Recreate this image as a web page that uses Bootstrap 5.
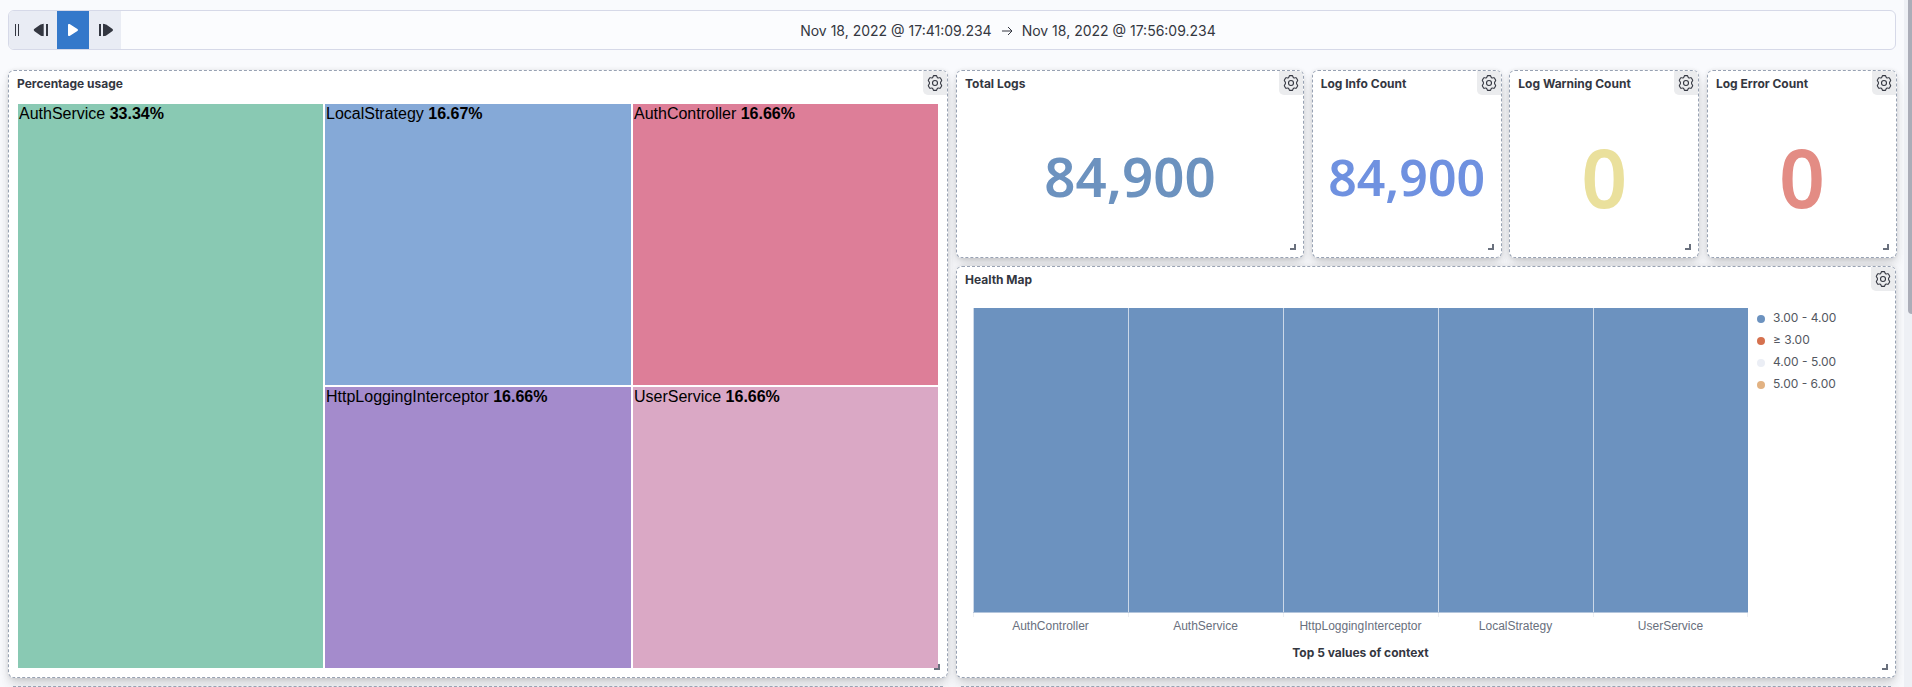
<!DOCTYPE html>
<html lang="en">
<head>
<meta charset="utf-8">
<title>Logs dashboard</title>
<meta name="viewport" content="width=device-width, initial-scale=1">
<link href="https://cdn.jsdelivr.net/npm/bootstrap@5.3.0/dist/css/bootstrap.min.css" rel="stylesheet">
<style>
body { background: #f9fafd; color: #343741; font-family: "Inter", sans-serif; font-size: 14px; }
.time-bar { height: 40px; margin: 10px 16px 0 8px; border: 1px solid #d6d9e8; border-radius: 6px; background: #fbfcfe; overflow: hidden; }
.time-tools { width: 112px; background: #e9ecf4; }
.tool-btn { width: 32px; color: #343741; }
.tool-btn.playing { background: #3478ca; color: #fff; }
.grip { width: 16px; }
.time-range { line-height: 20px; padding-top: 1px; }
.board { margin: 20px 7px 0 8px; gap: 8px; isolation: isolate; }
.col-half { width: 940px; }
.col-right { width: 941px; gap: 8px; }
.panel { position: relative; background: #fff; border: 1px dashed #98a2b3; border-radius: 6px; }
.panel::before { content: ""; position: absolute; inset: -1px; z-index: -1; border-radius: 6px;
  box-shadow: 0 .9px 4px -1px rgba(0,0,0,.1), 0 2.6px 8px -1px rgba(0,0,0,.08), 0 5.7px 12px -1px rgba(0,0,0,.07), 0 15px 15px -1px rgba(0,0,0,.05); }
.panel-title { font-size: 12px; font-weight: 700; line-height: 18px; padding: 4px 8px 0; margin: 0; height: 24px; }
.gear-btn { position: absolute; top: 0; right: 0; width: 24px; height: 24px; background: #ebecee; border-radius: 0 5px 0 5px; }
.resize-mark { position: absolute; right: 7px; bottom: 7px; width: 6px; height: 6px; border: solid #69707d; border-width: 0 2px 2px 0; }
.h-top { height: 188px; } .h-health { height: 412px; width: 940px; } .h-main { height: 608px; }
.w-total { width: 348px; } .w-count { width: 190px; }
.treemap { display: grid; grid-template-columns: 305px 306px 305px; grid-template-rows: 281px 281px; gap: 2px; margin: 9px 9px 0; font: 16px/18px "Liberation Sans", sans-serif; color: #000; }
.treemap > div { padding: 1px 0 0 1px; outline: 1px solid rgba(255,255,255,.7); }
.tall { grid-row: span 2; }
.figure-num { font-family: "Noto Sans", sans-serif; font-weight: 600; line-height: 1; }
.heat { margin: 17px 0 0 16px; width: 775px; }
.heat-cells { height: 305px; border-bottom: 1px solid #b3c5dc; background: #6c92bf; }
.heat-cells > div { width: 155px; border-left: 1px solid #cbd8e8; }
.heat-ticks { height: 4px; }
.heat-ticks > div { width: 155px; border-left: 1px solid #eceef2; }
.heat-ticks > div:last-child { border-right: 1px solid #eceef2; }
.heat-labels { font: 12px/14px "Liberation Sans", sans-serif; color: #69707d; margin-top: 2px; }
.heat-labels > div { width: 155px; text-align: center; }
.axis-name { font-size: 12px; font-weight: 700; line-height: 16px; margin-top: 12px; text-align: center; }
.legend-list { margin: 16px 0 0 9px; font-size: 12px; line-height: 22px; color: #535761; }
.dot { width: 8px; height: 8px; border-radius: 50%; margin-right: 8px; margin-top: 2px; }
.scroll-track { position: absolute; top: 0; right: 0; width: 8px; height: 100%; background: #eef0f5; }
.scroll-thumb { position: absolute; top: 0; right: 0; width: 4px; height: 314px; background: #abadb8; border-bottom-left-radius: 4px; }
.next-row { margin: 8px 16px 0 8px; gap: 8px; height: 1px; }
.next-row > div { width: 940px; flex: none; padding: 0 5px; }
.next-row > div > div { border-top: 1px dashed #98a2b3; }
</style>
</head>
<body>
<svg class="d-none"><symbol id="gear" viewBox="0 0 16 16"><g fill="none" stroke="#343741" stroke-width="1.1"><circle cx="8" cy="8" r="2.500"/><path d="M6.700 .6h2.600c.5 0 .6 1.700 1.300 2.200.8.500 2.300-.4 2.700 0l1.400 2.400c.3.500-1.200 1.500-1.200 2.800s1.500 2.300 1.200 2.800l-1.400 2.400c-.4.400-1.900-.5-2.700 0-.7.500-.8 2.200-1.300 2.200H6.700c-.5 0-.6-1.700-1.300-2.200-.8-.5-2.300.4-2.700 0L1.300 10.800C1 10.300 2.500 9.300 2.500 8S1 5.700 1.300 5.200l1.400-2.400c.4-.4 1.900.5 2.700 0C6.100 2.300 6.200.6 6.700.6z" stroke-linejoin="round"/></g></symbol></svg>
<div class="vh-100 overflow-hidden position-relative d-flow-root d-flex flex-column">
<div class="time-bar d-flex flex-shrink-0">
  <div class="time-tools d-flex align-items-stretch flex-shrink-0">
    <div class="grip d-flex align-items-center justify-content-center"><svg width="16" height="16" stroke="#343741"><path d="M6.500 2v12M9.500 2v12"/></svg></div>
    <div class="tool-btn d-flex align-items-center justify-content-center"><svg width="16" height="16" fill="currentColor"><path d="M13 2h2v12h-2zM10.700 2.300v11.400c0 .3-.4.500-.7.400-1.200 0-1.800-.2-2.500-.7L1.500 9.200c-1-.6-1-1.800 0-2.400l6-4.200C8.200 2.100 8.800 2 10 1.900c.4-.1.700.1.700.4z"/></svg></div>
    <div class="tool-btn playing d-flex align-items-center justify-content-center"><svg width="16" height="16" fill="currentColor"><path d="M3 3v10c0 .9.9 1.300 1.600.9L12.400 9c.8-.5.8-1.500 0-2L4.600 2.100C3.900 1.700 3 2.100 3 3z"/></svg></div>
    <div class="tool-btn d-flex align-items-center justify-content-center"><svg width="16" height="16" fill="currentColor"><path d="M2 2h2v12H2zM6 2.300v11.400c0 .3.400.5.700.4 1.200 0 1.800-.2 2.500-.7l6-4.200c1-.6 1-1.800 0-2.400l-6-4.200C8.500 2.100 7.900 2 6.700 1.900c-.4-.1-.7.100-.7.400z"/></svg></div>
  </div>
  <div class="time-range flex-grow-1 d-flex align-items-center justify-content-center">
    <span>Nov 18, 2022 @ 17:41:09.234</span>
    <svg class="mx-2" width="14" height="14" fill="none" stroke="#343741"><path d="M2 7h10M8 3l4 4-4 4"/></svg>
    <span>Nov 18, 2022 @ 17:56:09.234</span>
  </div>
</div>

<main class="board d-flex flex-shrink-0">
  <section class="panel col-half h-main flex-shrink-0">
    <h2 class="panel-title">Percentage usage</h2>
    <div class="gear-btn d-flex align-items-center justify-content-center"><svg width="16" height="16"><use href="#gear"/></svg></div>
    <div class="treemap">
      <div class="tall" style="background:#89c9b3">AuthService <b>33.34%</b></div>
      <div style="background:#85a9d7">LocalStrategy <b>16.67%</b></div>
      <div style="background:#dd7e98">AuthController <b>16.66%</b></div>
      <div style="background:#a48bcc">HttpLoggingInterceptor <b>16.66%</b></div>
      <div style="background:#daa8c5">UserService <b>16.66%</b></div>
    </div>
    <span class="resize-mark"></span>
  </section>

  <div class="col-right d-flex flex-column flex-shrink-0">
    <div class="d-flex justify-content-between">
      <section class="panel w-total h-top">
        <h2 class="panel-title">Total Logs</h2>
        <div class="gear-btn d-flex align-items-center justify-content-center"><svg width="16" height="16"><use href="#gear"/></svg></div>
        <div class="figure-num text-center" style="font-size:54.6px;color:#6c92bf;padding-top:54px">84,900</div>
        <span class="resize-mark"></span>
      </section>
      <section class="panel w-count h-top">
        <h2 class="panel-title">Log Info Count</h2>
        <div class="gear-btn d-flex align-items-center justify-content-center"><svg width="16" height="16"><use href="#gear"/></svg></div>
        <div class="figure-num text-center" style="font-size:50px;color:#6f91e0;padding-top:57px">84,900</div>
        <span class="resize-mark"></span>
      </section>
      <section class="panel w-count h-top">
        <h2 class="panel-title">Log Warning Count</h2>
        <div class="gear-btn d-flex align-items-center justify-content-center"><svg width="16" height="16"><use href="#gear"/></svg></div>
        <div class="figure-num text-center" style="font-size:80.5px;color:#eae09c;padding-top:42px">0</div>
        <span class="resize-mark"></span>
      </section>
      <section class="panel w-count h-top">
        <h2 class="panel-title">Log Error Count</h2>
        <div class="gear-btn d-flex align-items-center justify-content-center"><svg width="16" height="16"><use href="#gear"/></svg></div>
        <div class="figure-num text-center" style="font-size:80.5px;color:#e38c84;padding-top:42px">0</div>
        <span class="resize-mark"></span>
      </section>
    </div>
    <section class="panel h-health">
      <h2 class="panel-title">Health Map</h2>
      <div class="gear-btn d-flex align-items-center justify-content-center"><svg width="16" height="16"><use href="#gear"/></svg></div>
      <div class="d-flex">
        <div class="heat">
          <div class="heat-cells d-flex"><div></div><div></div><div></div><div></div><div></div></div>
          <div class="heat-ticks d-flex"><div></div><div></div><div></div><div></div><div></div></div>
          <div class="heat-labels d-flex"><div>AuthController</div><div>AuthService</div><div>HttpLoggingInterceptor</div><div>LocalStrategy</div><div>UserService</div></div>
          <div class="axis-name">Top 5 values of context</div>
        </div>
        <div class="legend-list">
          <div class="d-flex align-items-center"><span class="dot" style="background:#6c92bf"></span>3.00 - 4.00</div>
          <div class="d-flex align-items-center"><span class="dot" style="background:#d5714e"></span>≥ 3.00</div>
          <div class="d-flex align-items-center"><span class="dot" style="background:#ebeef5"></span>4.00 - 5.00</div>
          <div class="d-flex align-items-center"><span class="dot" style="background:#e2b282"></span>5.00 - 6.00</div>
        </div>
      </div>
      <span class="resize-mark"></span>
    </section>
  </div>
</main>
<div class="next-row d-flex flex-shrink-0 position-relative"><div><div></div></div><div><div></div></div></div>
<div class="scroll-track"><div class="scroll-thumb"></div></div>
</div>
<script src="https://cdn.jsdelivr.net/npm/bootstrap@5.3.0/dist/js/bootstrap.bundle.min.js"></script>
</body>
</html>
